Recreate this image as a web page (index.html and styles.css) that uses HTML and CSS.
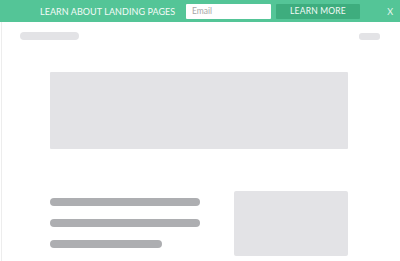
FILE: index.html
```html
<!doctype html>
<html>
<head>
<meta charset="utf-8">
<title>Landing page</title>
<link rel="stylesheet" href="styles.css">
</head>
<body>
<div class="topbar">
	<span class="topbar-title">Learn about landing pages</span>
	<input type="text" class="email" placeholder="Email">
	<button class="learn-btn">Learn more</button>
	<span class="close">X</span>
</div>

<div class="page">
	<div class="header">
		<div class="logo"></div>
		<div class="menu"></div>
	</div>

	<div class="content">
		<div class="hero"></div>
		<div class="lower">
			<div class="lines">
				<div class="line"></div>
				<div class="line"></div>
				<div class="line short"></div>
			</div>
			<div class="side-box"></div>
		</div>
	</div>
</div>
</body>
</html>
```

FILE: styles.css
```css
body {
	margin: 0;
	background: #fff;
	font-family: Lato, "Open Sans", sans-serif;
	overflow: hidden;
}
.topbar {
	display: flex;
	align-items: center;
	height: 22px;
	padding-left: 40px;
	padding-right: 7px;
	background: #54c597;
	color: #fff;
}
.topbar-title {
	font-size: 9px;
	letter-spacing: 0.06px;
	text-transform: uppercase;
	white-space: nowrap;
	width: 136px;
	color: #f4fbf8;
}
.email {
	box-sizing: border-box;
	margin: 0 0 0 10px;
	width: 85px;
	height: 15px;
	padding: 0 6px;
	border: 0;
	border-radius: 1px;
	font-family: Lato, sans-serif;
	font-size: 8.5px;
	color: #999;
	background: #fff;
}
.email::placeholder {
	color: #a6a6a6;
}
.learn-btn {
	box-sizing: border-box;
	margin-left: 5px;
	width: 84px;
	height: 15px;
	padding: 0;
	border: 0;
	border-radius: 1px;
	background: #3ead7e;
	color: #f4fbf8;
	font-family: Lato, sans-serif;
	font-size: 8.5px;
	letter-spacing: 0.2px;
	text-transform: uppercase;
}
.close {
	margin-left: auto;
	font-size: 9px;
	color: #e8f7f0;
}
.page {
	height: 239px;
	border-left: 1px solid #ededed;
	margin-left: 1px;
}
.header {
	display: flex;
	justify-content: space-between;
	align-items: flex-start;
	padding: 10px 20px 0 18px;
}
.logo {
	width: 59px;
	height: 8px;
	border-radius: 4px;
	background: #e3e3e6;
}
.menu {
	width: 21px;
	height: 7px;
	margin-top: 1px;
	border-radius: 3px;
	background: #e3e3e6;
}
.content {
	width: 298px;
	margin: 32px 0 0 48px;
}
.hero {
	height: 77px;
	border-radius: 1px;
	background: #e3e3e6;
}
.lower {
	display: flex;
	justify-content: space-between;
	margin-top: 42px;
}
.lines {
	display: flex;
	flex-direction: column;
	gap: 13px;
	padding-top: 7px;
	width: 150px;
}
.line {
	height: 8px;
	border-radius: 4px;
	background: #adaeb1;
}
.line.short {
	width: 112px;
}
.side-box {
	width: 114px;
	height: 65px;
	border-radius: 2px;
	background: #e3e3e6;
}
```
